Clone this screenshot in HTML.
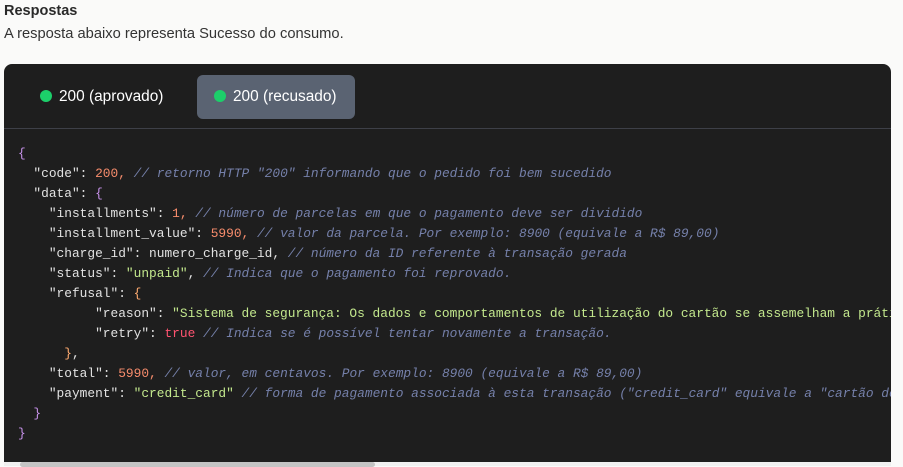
<!DOCTYPE html>
<html><head><meta charset="utf-8"><style>
body{margin:0;background:#fafaf9;width:903px;height:466px;overflow:hidden;font-family:"Liberation Sans",sans-serif;}
.h{position:absolute;left:4px;top:3px;font-size:14.5px;font-weight:bold;color:#2a2a2a;}
.p{position:absolute;left:4px;top:26px;font-size:14.7px;color:#333;}
.card{position:absolute;left:4px;top:64px;width:887px;height:398px;background:#1e1e1e;border-radius:8px 8px 0 0;overflow:hidden;}
.bar{position:absolute;left:0;top:64px;width:887px;height:1px;background:#3e4048;}
.tab{position:absolute;top:11px;height:44px;line-height:44px;color:#fff;font-size:15.4px;border-radius:6px;}
.tab i{display:inline-block;width:12px;height:12px;border-radius:50%;background:#1ccf6a;vertical-align:-1px;margin-right:7px;}
.t1{left:30px;padding:0 6px;}
.t2{left:193px;width:158px;background:#5a6372;box-sizing:border-box;padding-left:17px;}
pre{position:absolute;left:14px;top:80px;margin:0;font-family:"Liberation Mono",monospace;font-size:12.85px;line-height:20px;color:#e2e2e2;white-space:pre;}
.n{color:#f78c6c}.s{color:#c3e88d}.c{color:#7580aa;font-style:italic}.b{color:#c792ea}.y{color:#ffab70}.r{color:#ff5370}
.sb{position:absolute;left:20px;top:462px;width:355px;height:5px;background:#c4c4c4;border-radius:3px;}
.sbt{position:absolute;left:4px;top:462px;width:887px;height:4px;background:#f0f0f0;}
</style></head><body>
<div class="h">Respostas</div>
<div class="p">A resposta abaixo representa Sucesso do consumo.</div>
<div class="card">
<div class="tab t1"><i></i>200 (aprovado)</div>
<div class="tab t2"><i></i>200 (recusado)</div>
<div class="bar"></div>
<pre><span class="b">{</span>
  "code": <span class="n">200,</span> <span class="c">// retorno HTTP "200" informando que o pedido foi bem sucedido</span>
  "data": <span class="b">{</span>
    "installments": <span class="n">1,</span> <span class="c">// número de parcelas em que o pagamento deve ser dividido</span>
    "installment_value": <span class="n">5990,</span> <span class="c">// valor da parcela. Por exemplo: 8900 (equivale a R$ 89,00)</span>
    "charge_id": numero_charge_id, <span class="c">// número da ID referente à transação gerada</span>
    "status": <span class="s">"unpaid"</span>, <span class="c">// Indica que o pagamento foi reprovado.</span>
    "refusal": <span class="y">{</span>
          "reason": <span class="s">"Sistema de segurança: Os dados e comportamentos de utilização do cartão se assemelham a prática</span>
          "retry": <span class="r">true</span> <span class="c">// Indica se é possível tentar novamente a transação.</span>
      <span class="y">}</span>,
    "total": <span class="n">5990,</span> <span class="c">// valor, em centavos. Por exemplo: 8900 (equivale a R$ 89,00)</span>
    "payment": <span class="s">"credit_card"</span> <span class="c">// forma de pagamento associada à esta transação ("credit_card" equivale a "cartão de crédito")</span>
  <span class="b">}</span>
<span class="b">}</span></pre>
</div>
<div class="sbt"></div>
<div class="sb"></div>
</body></html>
